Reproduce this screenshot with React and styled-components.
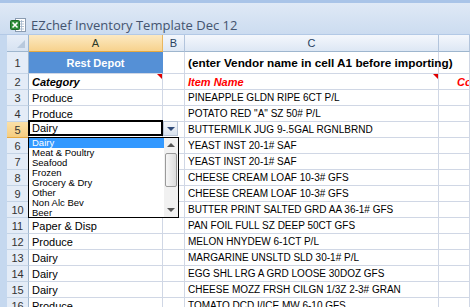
import React from "react";
import styled, { createGlobalStyle } from "styled-components";

const GlobalStyle = createGlobalStyle`
  html, body {
    margin: 0;
    padding: 0;
    overflow: hidden;
    background: #fff;
  }
  body {
    font-family: "Liberation Sans", Arial, sans-serif;
  }
`;

const Window = styled.div`
  width: 470px;
  height: 307px;
  overflow: hidden;
  display: flex;
  flex-direction: column;
`;

const TitleBar = styled.div`
  flex: 0 0 33px;
  box-sizing: border-box;
  display: flex;
  align-items: center;
  gap: 5px;
  padding: 13px 0 0 10px;
  border-top: 3px solid #a9c4e8;
  border-bottom: 1px solid #b3c9e6;
  background: linear-gradient(#dfe9f6, #ccdcf0);
`;

const Title = styled.span`
  font-family: "Open Sans", "Noto Sans", sans-serif;
  font-size: 13px;
  color: #44546f;
`;

const Sheet = styled.div`
  display: grid;
  grid-template-columns: 7px 22px 134px 22px 254px 31px;
  grid-template-rows: 17px 22px;
  grid-auto-rows: 16px;
  background: #fff;
`;

const Frame = styled.div`
  background: #c5d8ef;
`;

const Corner = styled.div`
  position: relative;
  box-sizing: border-box;
  background: linear-gradient(#e7eef8, #d7e3f2);
  border-right: 1px solid #9eb6ce;
  border-bottom: 1px solid #9eb6ce;
  &::after {
    content: "";
    position: absolute;
    right: 3px;
    bottom: 3px;
    border-left: 8px solid transparent;
    border-bottom: 8px solid #b8c9dd;
  }
`;

const ColHeader = styled.div`
  box-sizing: border-box;
  display: flex;
  align-items: center;
  justify-content: center;
  font-size: 11px;
  color: ${(p) => (p.$selected ? "#2a3a2a" : "#27415f")};
  background: ${(p) =>
    p.$selected
      ? "linear-gradient(#fce9c2, #f7d28d)"
      : "linear-gradient(#f4f7fc, #dde7f4)"};
  border-right: 1px solid ${(p) => (p.$selected ? "#e9b760" : "#b2c4dc")};
  border-bottom: 1px solid ${(p) => (p.$selected ? "#e6a940" : "#9eb6ce")};
`;

const RowHeader = styled.div`
  box-sizing: border-box;
  display: flex;
  align-items: center;
  justify-content: center;
  font-size: 11px;
  color: #333;
  background: ${(p) =>
    p.$selected ? "linear-gradient(#fbe0a8, #f6cd80)" : "#e4ecf7"};
  border-right: 1px solid #9eb6ce;
  border-bottom: 1px solid ${(p) => (p.$selected ? "#e6a940" : "#c5d4e6")};
`;

const Cell = styled.div`
  position: relative;
  box-sizing: border-box;
  display: flex;
  align-items: center;
  justify-content: ${(p) => (p.$center ? "center" : "flex-start")};
  padding-left: ${(p) => (p.$center ? 0 : p.$indent || 3)}px;
  white-space: nowrap;
  overflow: ${(p) => (p.$spill ? "visible" : "hidden")};
  font-size: ${(p) => p.$size || 11}px;
  font-weight: ${(p) => (p.$bold ? 700 : 400)};
  font-style: ${(p) => (p.$italic ? "italic" : "normal")};
  color: ${(p) => p.$color || "#000"};
  background: ${(p) => p.$bg || "#fff"};
  border-right: 1px solid ${(p) => p.$line || "#d0d7e5"};
  border-bottom: 1px solid #d0d7e5;
  z-index: ${(p) => (p.$spill ? 2 : 0)};
`;

const CommentMark = styled.span`
  position: absolute;
  top: 0;
  right: 0;
  border-left: 5px solid transparent;
  border-top: 5px solid #e00000;
`;

const Selection = styled.div`
  position: absolute;
  left: -1px;
  top: -2px;
  width: 135px;
  height: 16px;
  box-sizing: border-box;
  border: 2px solid #000;
  display: flex;
  align-items: center;
  padding-left: 2px;
  background: #fff;
  font-size: 11px;
  z-index: 3;
`;

const DropButton = styled.div`
  position: absolute;
  left: 134px;
  top: -1px;
  width: 15px;
  height: 15px;
  box-sizing: border-box;
  border: 1px solid #b7c4d6;
  background: linear-gradient(#f7f9fc, #d9e2ee);
  display: flex;
  align-items: center;
  justify-content: center;
  &::after {
    content: "";
    border-left: 4px solid transparent;
    border-right: 4px solid transparent;
    border-top: 4px solid #2f4a78;
  }
`;

const ListBox = styled.div`
  position: absolute;
  left: -1px;
  top: 15px;
  width: 151px;
  height: 81px;
  box-sizing: border-box;
  border: 1px solid #000;
  background: #fff;
  display: flex;
  z-index: 4;
`;

const Options = styled.div`
  flex: 1;
  display: flex;
  flex-direction: column;
`;

const Option = styled.div`
  height: 10px;
  line-height: 10px;
  padding-left: 3px;
  font-size: 9.5px;
  white-space: nowrap;
  color: ${(p) => (p.$active ? "#fff" : "#000")};
  background: ${(p) => (p.$active ? "#3399ff" : "transparent")};
`;

const ScrollBar = styled.div`
  width: 14px;
  display: flex;
  flex-direction: column;
  background: #f1f1f1;
`;

const ScrollArrow = styled.div`
  height: 14px;
  display: flex;
  align-items: center;
  justify-content: center;
  &::after {
    content: "";
    border-left: 4px solid transparent;
    border-right: 4px solid transparent;
    ${(p) =>
      p.$up ? "border-bottom: 4px solid #555;" : "border-top: 4px solid #555;"}
  }
`;

const ScrollThumb = styled.div`
  height: 34px;
  margin: 1px 1px 0 1px;
  box-sizing: border-box;
  border: 1px solid #9a9a9a;
  border-radius: 2px;
  background: linear-gradient(90deg, #f6f6f6, #dcdcdc);
`;

const ScrollTrack = styled.div`
  flex: 1;
`;

const ExcelIcon = () => (
  <svg width="16" height="16" viewBox="0 0 16 16">
    <rect x="5.5" y="1.5" width="10" height="13" fill="#fff" stroke="#8a9bb0" />
    <path d="M9 4.5h5M9 7h5M9 9.5h5M9 12h5M11.5 3v11" stroke="#9fb3c8" strokeWidth="0.8" />
    <rect x="0.5" y="3.5" width="9" height="9" rx="1" fill="#2f8f3a" stroke="#1d6a27" />
    <path d="M2.5 5.5l5 5M7.5 5.5l-5 5" stroke="#fff" strokeWidth="1.6" />
  </svg>
);

const categories = [
  "Dairy",
  "Meat & Poultry",
  "Seafood",
  "Frozen",
  "Grocery & Dry",
  "Other",
  "Non Alc Bev",
  "Beer",
];

const rows = [
  [3, "Produce", "PINEAPPLE GLDN RIPE 6CT P/L"],
  [4, "Produce", 'POTATO RED "A" SZ 50# P/L'],
  [5, "Dairy", "BUTTERMILK JUG 9-.5GAL RGNLBRND"],
  [6, "Grocery & Dry", "YEAST INST 20-1# SAF"],
  [7, "Grocery & Dry", "YEAST INST 20-1# SAF"],
  [8, "Dairy", "CHEESE CREAM LOAF 10-3# GFS"],
  [9, "Dairy", "CHEESE CREAM LOAF 10-3# GFS"],
  [10, "Dairy", "BUTTER PRINT SALTED GRD AA 36-1# GFS"],
  [11, "Paper & Disp", "PAN FOIL FULL SZ DEEP 50CT GFS"],
  [12, "Produce", "MELON HNYDEW 6-1CT P/L"],
  [13, "Dairy", "MARGARINE UNSLTD SLD 30-1# P/L"],
  [14, "Dairy", "EGG SHL LRG A GRD LOOSE 30DOZ GFS"],
  [15, "Dairy", "CHEESE MOZZ FRSH CILGN 1/3Z 2-3# GRAN"],
  [16, "Produce", "TOMATO DCD I/ICE MW 6-10 GFS"],
];

export default function App() {
  return (
    <>
      <GlobalStyle />
      <Window>
        <TitleBar>
          <ExcelIcon />
          <Title>EZchef Inventory Template Dec 12</Title>
        </TitleBar>
        <Sheet>
          <Frame />
          <Corner />
          <ColHeader $selected>A</ColHeader>
          <ColHeader>B</ColHeader>
          <ColHeader>C</ColHeader>
          <ColHeader />

          <Frame />
          <RowHeader>1</RowHeader>
          <Cell $bg="#5590d6" $color="#fff" $bold $center $line="#5590d6">
            Rest Depot
          </Cell>
          <Cell />
          <Cell $bold $spill $size={11.75}>
            (enter Vendor name in cell A1 before importing)
          </Cell>
          <Cell />

          <Frame />
          <RowHeader>2</RowHeader>
          <Cell $bold $italic>
            Category
            <CommentMark />
          </Cell>
          <Cell />
          <Cell $bold $italic $color="#ff0000">
            Item Name
            <CommentMark />
          </Cell>
          <Cell $bold $italic $color="#ff0000" $indent={18}>
            Cost
          </Cell>

          {rows.map(([n, cat, item]) => (
            <React.Fragment key={n}>
              <Frame />
              <RowHeader $selected={n === 5}>{n}</RowHeader>
              <Cell $spill={n === 5}>
                {n === 5 ? (
                  <>
                    <Selection>{cat}</Selection>
                    <DropButton />
                    <ListBox>
                      <Options>
                        {categories.map((c, i) => (
                          <Option key={c} $active={i === 0}>
                            {c}
                          </Option>
                        ))}
                      </Options>
                      <ScrollBar>
                        <ScrollArrow $up />
                        <ScrollThumb />
                        <ScrollTrack />
                        <ScrollArrow />
                      </ScrollBar>
                    </ListBox>
                  </>
                ) : (
                  cat
                )}
              </Cell>
              <Cell />
              <Cell $size={10}>{item}</Cell>
              <Cell />
            </React.Fragment>
          ))}
        </Sheet>
      </Window>
    </>
  );
}
